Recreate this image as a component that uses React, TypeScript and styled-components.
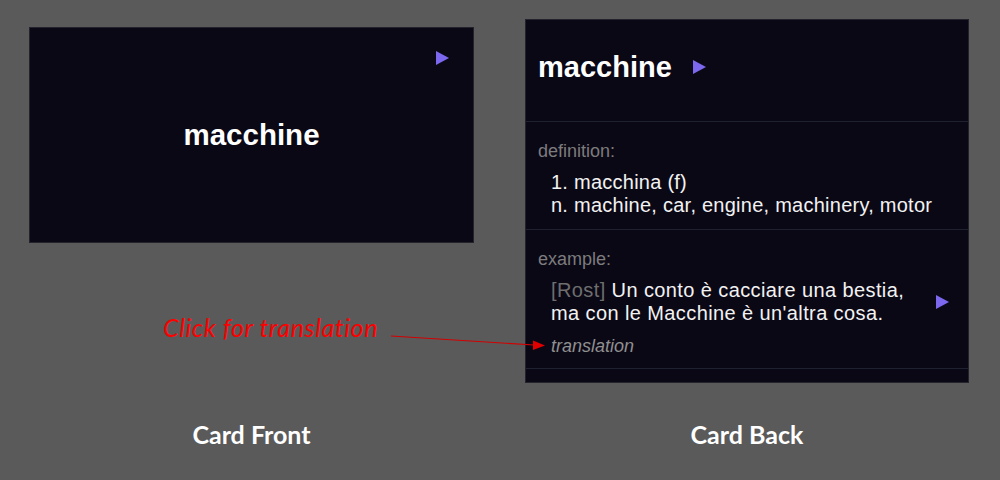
import React from 'react';
import styled, { createGlobalStyle } from 'styled-components';

const GlobalStyle = createGlobalStyle`
  html, body {
    margin: 0;
    padding: 0;
    background: #5a5a5a;
  }
  body {
    width: 1000px;
    height: 480px;
    overflow: hidden;
    font-family: "Liberation Sans", Arial, sans-serif;
  }
`;

const Page = styled.div`
  position: relative;
  display: grid;
  grid-template-columns: 445px 444px;
  column-gap: 51px;
  row-gap: 36px;
  align-items: start;
  padding: 19px 0 0 29px;
`;

const Card = styled.div<{ $offset?: number }>`
  box-sizing: border-box;
  background: #0b0816;
  border: 1px solid #24222d;
  color: #f2f2f2;
  margin-top: ${(p) => p.$offset ?? 0}px;
`;

const FrontCard = styled(Card)`
  height: 216px;
  display: grid;
  grid-template: 1fr / 1fr;
`;

const FrontWord = styled.div`
  grid-area: 1 / 1;
  place-self: center;
  font-size: 29.5px;
  font-weight: 700;
  line-height: 36px;
  color: #fff;
`;

const CornerPlay = styled.div`
  grid-area: 1 / 1;
  justify-self: end;
  align-self: start;
  margin: 23px 24px 0 0;
`;

const Header = styled.div`
  display: flex;
  align-items: center;
  gap: 21px;
  padding: 29px 12px 36px;
`;

const Title = styled.div`
  font-size: 29px;
  font-weight: 700;
  line-height: 36px;
  color: #fff;
`;

const Section = styled.div<{ $bottom?: number }>`
  border-top: 1px solid #1d2130;
  padding: 19px 12px ${(p) => p.$bottom ?? 12}px;
`;

const Footer = styled.div`
  border-top: 1px solid #1d2130;
  height: 13px;
`;

const Label = styled.div`
  font-size: 18px;
  line-height: 20px;
  color: #7c7c7c;
`;

const Body = styled.div`
  margin-top: 10px;
  padding-left: 13px;
  font-size: 20px;
  line-height: 23px;
  letter-spacing: 0.25px;
  color: #f2f2f2;
`;

const ExampleRow = styled.div`
  display: flex;
  align-items: center;
  margin-top: 10px;
  padding-left: 13px;
  padding-right: 7px;
  gap: 12px;
`;

const Sentence = styled.div`
  flex: 1;
  font-size: 20px;
  line-height: 23px;
  letter-spacing: 0.4px;
  color: #f2f2f2;
`;

const Source = styled.span`
  color: #6e6e6e;
`;

const Translation = styled.div`
  margin-top: 11px;
  padding-left: 13px;
  font-size: 18px;
  line-height: 20px;
  font-style: italic;
  color: #8f8f8f;
`;

const Caption = styled.div`
  text-align: center;
  font-family: Lato, "Open Sans", sans-serif;
  font-weight: 700;
  font-size: 25px;
  line-height: 30px;
  color: #fff;
`;

const Note = styled.div`
  position: absolute;
  left: 163px;
  top: 313px;
  font-family: Lato, "Open Sans", sans-serif;
  font-style: italic;
  font-size: 25px;
  line-height: 28px;
  letter-spacing: 0.6px;
  color: #ff0000;
`;

const Arrow = styled.svg`
  position: absolute;
  left: 388px;
  top: 330px;
  overflow: visible;
`;

const Play = () => (
  <svg width="13" height="14" viewBox="0 0 13 14">
    <polygon points="0,0 13,7 0,14" fill="#7b68ee" />
  </svg>
);

export default function App() {
  return (
    <>
      <GlobalStyle />
      <Page>
        <FrontCard $offset={8}>
          <FrontWord>macchine</FrontWord>
          <CornerPlay>
            <Play />
          </CornerPlay>
        </FrontCard>

        <Card>
          <Header>
            <Title>macchine</Title>
            <Play />
          </Header>
          <Section>
            <Label>definition:</Label>
            <Body>
              1. macchina (f)
              <br />
              n. machine, car, engine, machinery, motor
            </Body>
          </Section>
          <Section>
            <Label>example:</Label>
            <ExampleRow>
              <Sentence>
                <Source>[Rost]</Source> Un conto è cacciare una bestia, ma con le Macchine è
                un'altra cosa.
              </Sentence>
              <Play />
            </ExampleRow>
            <Translation>translation</Translation>
          </Section>
          <Footer />
        </Card>

        <Caption>Card Front</Caption>
        <Caption>Card Back</Caption>

        <Note>Click for translation</Note>
        <Arrow width="160" height="20" viewBox="0 0 160 20">
          <line x1="3" y1="6" x2="146" y2="15" stroke="#d40000" strokeWidth="1.2" />
          <polygon points="145,10.5 157,15.5 145,20" fill="#e00000" />
        </Arrow>
      </Page>
    </>
  );
}
